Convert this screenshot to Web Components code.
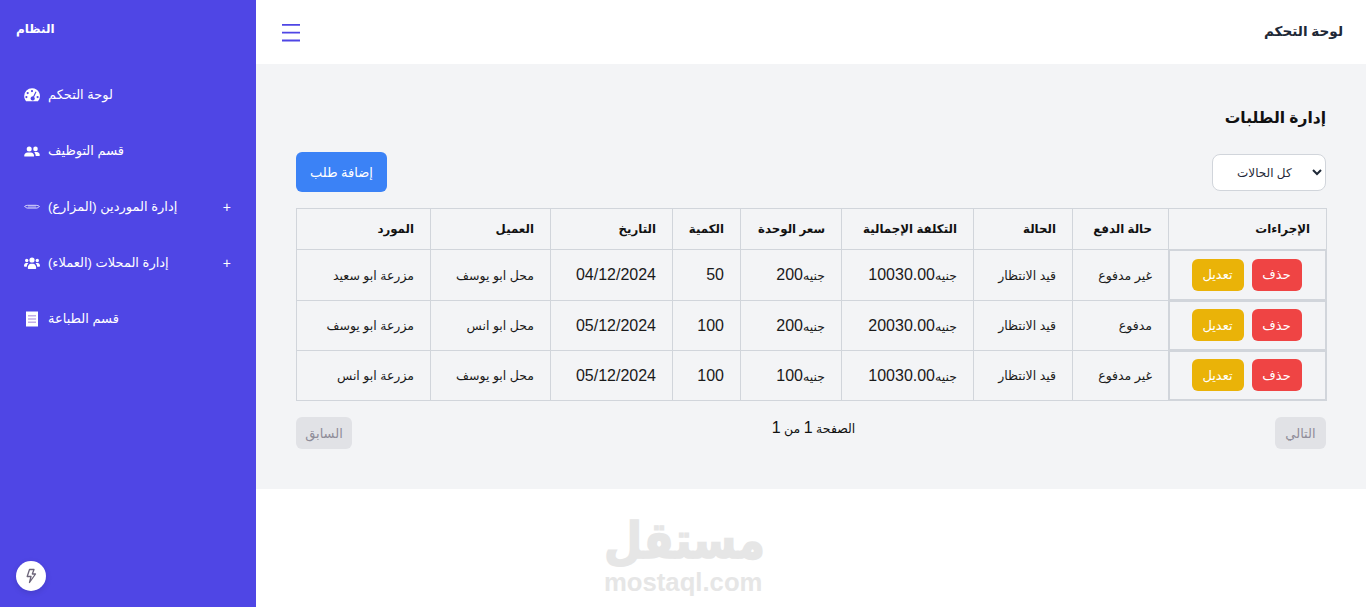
<!DOCTYPE html>
<html lang="ar">
<head>
<meta charset="utf-8">
<title>إدارة الطلبات</title>
<style>
html,body{margin:0;padding:0;height:100%;background:#fff;overflow:hidden}
body{font-family:"Liberation Sans","DejaVu Sans",sans-serif;color:#111827}
</style>
</head>
<body>
<app-shell>
  <side-bar slot="side"></side-bar>
  <top-bar slot="top"></top-bar>
  <orders-panel slot="main"></orders-panel>
  <mostaql-mark slot="foot"></mostaql-mark>
</app-shell>
<script>
const ICONS={
gauge:'<path fill="#fff" fill-rule="evenodd" d="M8 1.2a7.800 7.800 0 0 0-7.800 7.800c0 2 .7 3.800 1.900 5.200h11.800A7.800 7.800 0 0 0 8 1.200zM8 3a1.100 1.100 0 1 1 0 2.200A1.100 1.100 0 0 1 8 3zM3.700 5a1.100 1.100 0 1 1 0 2.200 1.100 1.100 0 0 1 0-2.200zM2.400 9a1.100 1.100 0 1 1 0 2.200 1.100 1.100 0 0 1 0-2.200zM13.600 9a1.100 1.100 0 1 1 0 2.200 1.100 1.100 0 0 1 0-2.200zM11.500 4.400l1 .5-2.400 5a2.100 2.100 0 1 1-1-.5z"/>',
friends:'<g fill="#fff"><circle cx="5.200" cy="5.900" r="2.500"/><circle cx="11.500" cy="5.900" r="2.300"/><path d="M.2 13c0-2.100 1.500-3.500 3.300-3.500h3.400c1.700 0 3.200 1.400 3.200 3.500 0 .4-.3.600-.7.600H.9c-.4 0-.7-.2-.7-.6z"/><path d="M10.200 9.300c.4-.2 .9-.2 1.500-.2h1.200c1.600 0 2.900 1.300 2.900 3.100 0 .5-.3.800-.7.800h-3.400c0-1.500-.6-2.800-1.500-3.700z"/></g>',
shake:'<path fill="none" stroke="#fff" stroke-opacity=".75" stroke-width="1" d="M.6 7.400c1-.8 2-1.100 3-1.100h8.500c1.400 0 2.400.4 3.300 1.100-.8 1.100-2 1.700-3.400 1.700H4c-1.300 0-2.500-.6-3.400-1.700z"/><path fill="none" stroke="#fff" stroke-opacity=".75" stroke-width=".8" d="M5 6.500v2.400M7 6.500v2.400M9 6.500v2.400M11 6.500v2.400"/>',
users:'<g fill="#fff"><circle cx="8" cy="5" r="2.600"/><circle cx="2.700" cy="5.500" r="1.700"/><circle cx="13.300" cy="5.500" r="1.700"/><path d="M3.800 13c0-2.400 1.500-4.300 3.200-4.300h2c1.700 0 3.200 1.900 3.200 4.300 0 .6-.4 1-1 1H4.800c-.6 0-1-.4-1-1z"/><path d="M0 10.800C0 9.200 1 8 2.200 8h1.100c.4 0 .8.100 1.100.3-1 1-1.500 2.100-1.600 3.500H.8c-.5 0-.8-.4-.8-1z"/><path d="M16 10.800C16 9.200 15 8 13.800 8h-1.100c-.4 0-.8.100-1.100.3 1 1 1.500 2.100 1.600 3.500h2c.5 0 .8-.4.800-1z"/></g>',
receipt:'<path fill="#fff" d="M2 0l1 1 1-1 1 1 1-1 1 1 1-1 1 1 1-1 1 1 1-1 1 1 1-1v16l-1-1-1 1-1-1-1 1-1-1-1 1-1-1-1 1-1-1-1 1-1-1-1 1z"/><path fill="#c4aee8" d="M4 4h8v1.600H4zM4 7.200h8v1.600H4zM4 10.400h8V12H4z"/>'
};
function def(name,css,html,init){
  customElements.define(name,class extends HTMLElement{
    constructor(){super();const r=this.attachShadow({mode:'open'});
      r.innerHTML='<style>'+css+'</style>'+(typeof html==='function'?html(this):html);}
    connectedCallback(){if(init)init(this)}
  });
}
def('app-shell',`
:host{display:flex;width:1366px;height:607px;overflow:hidden}
.side{flex:0 0 256px;display:flex}
.col{flex:1;display:flex;flex-direction:column;min-width:0}
`,`<div class="side"><slot name="side"></slot></div>
<div class="col"><slot name="top"></slot><slot name="main"></slot><slot name="foot"></slot></div>`);

def('nav-item',`
:host{display:flex;align-items:center;height:56px;padding:0 24px;box-sizing:border-box;color:#fff;font-size:13px;gap:8px}
svg{width:16px;height:16px;flex:none}
.t{flex:1;line-height:20px}
.p{font-family:"Liberation Sans",sans-serif;font-size:14px;width:10px;text-align:right;margin-right:1px}
`,el=>`<svg viewBox="0 0 16 16">${ICONS[el.getAttribute('icon')]}</svg><span class="t"><slot></slot></span>${el.hasAttribute('plus')?'<span class="p">+</span>':''}`);

def('side-bar',`
:host{display:block;position:relative;width:256px;height:607px;background:#4f46e5;color:#fff;box-sizing:border-box;padding:15px 0 0}
h1{margin:0 0 0 16px;font-size:12px;line-height:28px;font-weight:700}
nav{display:flex;flex-direction:column;margin-top:24px}
.bolt{position:absolute;left:16px;bottom:16px;width:30px;height:30px;border-radius:50%;background:#fff;display:flex;align-items:center;justify-content:center;box-shadow:0 2px 6px rgba(0,0,0,.12)}
.bolt svg{width:16px;height:16px}
`,`<h1>النظام</h1>
<nav>
<nav-item icon="gauge">لوحة التحكم</nav-item>
<nav-item icon="friends">قسم التوظيف</nav-item>
<nav-item icon="shake" plus>إدارة الموردين (المزارع)</nav-item>
<nav-item icon="users" plus>إدارة المحلات (العملاء)</nav-item>
<nav-item icon="receipt">قسم الطباعة</nav-item>
</nav>
<div class="bolt"><svg viewBox="0 0 16 16"><path fill="none" stroke="#6b6478" stroke-width="1.300" stroke-linejoin="round" d="M6.500 1.500h4.500L9.300 6h3.200l-6 8.500L8 8.500H4.200z"/></svg></div>`);

def('top-bar',`
:host{display:flex;align-items:center;justify-content:space-between;height:64px;flex:none;background:#fff;padding:0 23px 0 26px;box-sizing:border-box}
svg{width:18px;height:18px;display:block;margin-top:-1px;overflow:visible}
b{font-size:13.600px;color:#1f2937;margin-top:-3px}
`,`<svg viewBox="0 0 18 18"><path stroke="#4f46e5" stroke-width="1.800" d="M0 1.800h18M0 9.700h18M0 17.500h18"/></svg><b>لوحة التحكم</b>`);

def('ui-btn',`
:host{display:inline-flex}
button{all:unset;box-sizing:border-box;display:flex;align-items:center;justify-content:center;width:100%;height:100%;border-radius:6px;color:#fff;font:inherit;font-size:13px;cursor:pointer}
:host([kind=add]) button{background:#3b82f6;width:91px;height:40px}
:host([kind=edit]) button{background:#eab308;width:52px;height:32px}
:host([kind=del]) button{background:#ef4444;width:50px;height:32px}
:host([kind=off]) button{background:#e1e2e6;color:#8f8d99;height:32px;cursor:default}
`,`<button><slot></slot></button>`);

const COLS=[158,96,99,132,101,68,122,120,134];
const HEAD=['الإجراءات','حالة الدفع','الحالة','التكلفة الإجمالية','سعر الوحدة','الكمية','التاريخ','العميل','المورد'];
const ROWS=[
['غير مدفوع','قيد الانتظار','10030.00','200','50','04/12/2024','محل ابو يوسف','مزرعة ابو سعيد'],
['مدفوع','قيد الانتظار','20030.00','200','100','05/12/2024','محل ابو انس','مزرعة ابو يوسف'],
['غير مدفوع','قيد الانتظار','10030.00','100','100','05/12/2024','محل ابو يوسف','مزرعة ابو انس']];
const money=v=>`<span class="ar">جنيه</span><span class="n">${v}</span>`;
def('orders-table',`
:host{display:block;width:1030px}
table{border-collapse:collapse;table-layout:fixed;width:1030px;direction:rtl}
th,td{border:1px solid #d1d5db;text-align:right;padding:0 16px;box-sizing:border-box;white-space:nowrap}
th{height:41px;font-size:11.800px;font-weight:700;color:#111}
td{height:50px;font-size:12.500px;color:#1a1a1a}
tr.r0 td{height:51px}
.n{font-size:16px}
td.act{padding:0}
.wrap{display:flex;gap:8px;justify-content:center;align-items:center;height:100%;box-sizing:border-box;padding:0 2px 1px 0;box-shadow:inset 0 0 0 1px #d1d5db}
`,`<table><colgroup>${COLS.map(w=>`<col style="width:${w}px">`).join('')}</colgroup>
<thead><tr>${HEAD.map(h=>`<th>${h}</th>`).join('')}</tr></thead>
<tbody>${ROWS.map((r,i)=>`<tr class="r${i}"><td class="act"><div class="wrap"><ui-btn kind="del">حذف</ui-btn><ui-btn kind="edit">تعديل</ui-btn></div></td>
<td>${r[0]}</td><td>${r[1]}</td><td>${money(r[2])}</td><td>${money(r[3])}</td><td><span class="n">${r[4]}</span></td><td><span class="n">${r[5]}</span></td><td>${r[6]}</td><td>${r[7]}</td></tr>`).join('')}</tbody></table>`);

def('orders-panel',`
:host{display:block;flex:none;background:#f3f4f6;height:425px;box-sizing:border-box;padding:40px}
h2{margin:0;font-size:15.500px;line-height:28px;text-align:right;font-weight:700;color:#111}
.bar{display:flex;justify-content:space-between;align-items:center;margin:20px 0 16px;height:40px}
select{width:114px;height:37px;margin-top:1px;border:1px solid #d1d5db;border-radius:8px;background:#fff;padding:0 0 0 20px;font:inherit;font-size:12px;color:#1f2937;box-sizing:border-box}
.pg{display:flex;justify-content:space-between;margin-top:16px;height:32px}
.pg span{font-size:12.500px;line-height:22px;color:#111}
.pg .n{font-size:16px}
`,`<h2>إدارة الطلبات</h2>
<div class="bar"><ui-btn kind="add">إضافة طلب</ui-btn>
<select><option>كل الحالات</option><option>قيد الانتظار</option><option>مكتمل</option></select></div>
<orders-table></orders-table>
<div class="pg"><ui-btn kind="off" style="width:56px">السابق</ui-btn>
<span>الصفحة <span class="n">1</span> من <span class="n">1</span></span>
<ui-btn kind="off" style="width:51px">التالي</ui-btn></div>`);

def('mostaql-mark',`
:host{display:block;position:relative;flex:1}
.m{position:absolute;left:348px;top:26px;width:158px;text-align:center;color:#e6e6e6}
.a{font-size:44px;font-weight:700;font-family:"DejaVu Sans",sans-serif;line-height:51px;height:51px;-webkit-text-stroke:1.500px #e6e6e6;transform:scaleY(1.15)}
.e{font-size:25.700px;font-weight:700;font-family:"Liberation Sans",sans-serif;line-height:28px;height:28px;margin-top:2px}
`,`<div class="m"><div class="a">مستقل</div><div class="e">mostaql.com</div></div>`);
</script>
</body>
</html>
